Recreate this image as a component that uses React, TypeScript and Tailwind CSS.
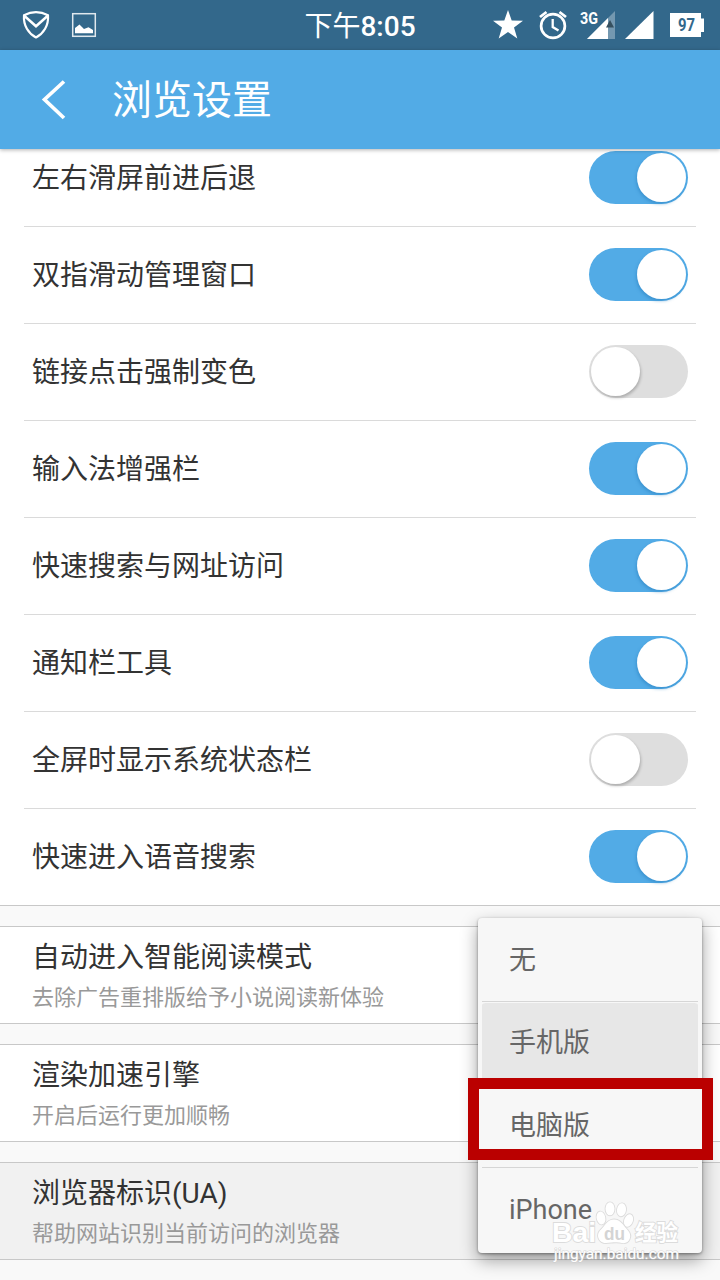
import React from "react";

const settings = [
  { label: "左右滑屏前进后退", on: true },
  { label: "双指滑动管理窗口", on: true },
  { label: "链接点击强制变色", on: false },
  { label: "输入法增强栏", on: true },
  { label: "快速搜索与网址访问", on: true },
  { label: "通知栏工具", on: true },
  { label: "全屏时显示系统状态栏", on: false },
  { label: "快速进入语音搜索", on: true },
];

const cards = [
  { title: "自动进入智能阅读模式", note: "去除广告重排版给予小说阅读新体验", active: false },
  { title: "渲染加速引擎", note: "开启后运行更加顺畅", active: false },
  { title: "浏览器标识(UA)", note: "帮助网站识别当前访问的浏览器", active: true },
];

const choices = ["无", "手机版", "电脑版", "iPhone"];

function Toggle({ on }: { on: boolean }) {
  return (
    <div
      className={
        "mb-px flex h-[53px] w-[99px] items-center rounded-full " +
        (on ? "justify-end bg-[#52abe6] pr-[2px]" : "justify-start bg-[#dedede] pl-[2px]")
      }
    >
      <div
        className={
          "size-[49px] rounded-full bg-white " +
          (on ? "shadow-[-1px_2px_3px_#2a80c080]" : "shadow-[1px_2px_3px_#00000038]")
        }
      />
    </div>
  );
}

function StatusBar() {
  return (
    <div className="flex h-[50px] shrink-0 items-center bg-[#33688b] text-white">
      <svg className="h-[50px] w-[300px] shrink-0" viewBox="0 0 300 50" fill="none">
        <path
          d="M24 15.3Q36 8.8 48 15.3C48.8 25.5 43.5 33.5 36 37.5C28.500 33.5 23.200 25.5 24 15.3Z"
          stroke="#fff"
          strokeWidth="2.200"
          strokeLinejoin="round"
        />
        <path d="M24.500 16L36 26.300L47.500 16" stroke="#fff" strokeWidth="2.500" />
        <rect x="72.700" y="13.700" width="22.600" height="22.600" stroke="#fff" strokeOpacity=".85" strokeWidth="1.500" />
        <path d="M75 33.300V28L79.500 24.500L84 29L88.500 27.200L93 30V33.300Z" fill="#fff" />
      </svg>
      <div className="w-[120px] pt-[3px] text-center text-[28px] leading-[47px] font-medium whitespace-nowrap">
        <span className="font-normal">下午</span>8:05
      </div>
      <svg className="ml-auto h-[50px] w-[260px] shrink-0" viewBox="460 0 260 50" fill="none">
        <path
          d="M508 10L511.700 20.500L523 20.800L514 27.500L517.300 38.500L508 32L498.700 38.500L502 27.500L493 20.800L504.300 20.500Z"
          fill="#fff"
        />
        <circle cx="553" cy="26" r="11.900" stroke="#fff" strokeWidth="2.700" />
        <path d="M552.700 19V27L558.500 30.500" stroke="#fff" strokeWidth="2.300" />
        <path d="M540 17L546.500 12M566 17L559.500 12" stroke="#fff" strokeWidth="2.800" />
        <path d="M615 11V39H587Z" fill="#fff" fillOpacity=".32" />
        <path d="M608 18V39H587Z" fill="#fff" />
        <path d="M606 27.500L610 20L614 27.500Z" fill="#36505f" />
        <text x="580" y="23.500" fill="#fff" fontSize="16.500" fontWeight="700" textLength="18" lengthAdjust="spacingAndGlyphs">
          3G
        </text>
        <path d="M653.500 11V39H625Z" fill="#fff" />
        <path d="M670 13H701V18.500H704V32H701V37H670Z" fill="#fff" />
        <text x="678" y="31.300" fill="#33688b" fontSize="18" fontWeight="700" textLength="17" lengthAdjust="spacingAndGlyphs">
          97
        </text>
      </svg>
    </div>
  );
}

function Watermark() {
  return (
    <svg
      className="absolute top-[1195px] left-[545px] z-30 h-[75px] w-[145px]"
      viewBox="545 1195 145 75"
      fill="#fff"
      stroke="#dcdcdc"
      strokeWidth="1.800"
      paintOrder="stroke"
    >
      <text x="552" y="1242" fontSize="27" fontWeight="700" textLength="44" lengthAdjust="spacingAndGlyphs" className="font-['Liberation_Sans']">
        Bai
      </text>
      <ellipse cx="601" cy="1218" rx="4.300" ry="6.500" transform="rotate(-12 601 1218)" />
      <ellipse cx="610" cy="1208.800" rx="4.500" ry="6.500" />
      <ellipse cx="621.500" cy="1209.800" rx="4.500" ry="6.500" transform="rotate(8 621.500 1209.800)" />
      <ellipse cx="628.500" cy="1220.500" rx="4.300" ry="6.500" transform="rotate(20 628.500 1220.500)" />
      <path d="M614 1219.500C607 1219.500 605 1226 601 1229.500C595 1235 599 1243 606 1243C611 1243 617 1241.500 622 1243C629 1244.500 633 1236 628 1230.500C623 1225.500 621 1219.500 614 1219.500Z" />
      <text x="604" y="1239.500" fontSize="19" fontWeight="700" fill="#d4d4d4" stroke="none" textLength="21" lengthAdjust="spacingAndGlyphs" className="font-['Liberation_Sans']">
        du
      </text>
      <text x="635" y="1240" fontSize="22" fontWeight="700" textLength="43" lengthAdjust="spacingAndGlyphs">
        经验
      </text>
      <text x="554" y="1259" fontSize="15.500" textLength="125" lengthAdjust="spacingAndGlyphs" stroke="#c8c8c8" strokeOpacity=".7" strokeWidth="1.200">
        jingyan.baidu.com
      </text>
    </svg>
  );
}

export default function App() {
  return (
    <div className="relative flex h-[1280px] w-[720px] flex-col overflow-hidden bg-[#f9f9f9] font-[Roboto,'Noto_Sans_CJK_SC',sans-serif]">
      <StatusBar />
      <header className="relative z-10 flex h-[99px] shrink-0 items-center bg-[#52abe6] pl-[40px] text-white shadow-[0_1px_4px_#00000050]">
        <svg className="mr-[46px] h-[44px] w-[26px]" viewBox="0 0 26 44" fill="none">
          <path d="M24 3.500L4.500 21.500L24 40" stroke="#fff" strokeWidth="3.700" />
        </svg>
        <h1 className="pt-[2px] text-[40px] leading-[50px] font-normal">浏览设置</h1>
      </header>

      <main className="flex min-h-0 flex-1 flex-col overflow-hidden">
        <section className="-mt-[19px] shrink-0 border-b border-[#c8c8c8] bg-white px-6">
          {settings.map((s) => (
            <div
              key={s.label}
              className="flex h-[97px] items-center justify-between border-b border-[#dadada] px-2 last:h-[96px] last:border-b-0"
            >
              <span className="pt-[2px] text-[28px] leading-[40px] text-[#333]">{s.label}</span>
              <Toggle on={s.on} />
            </div>
          ))}
        </section>
        {cards.map((c) => (
          <section
            key={c.title}
            className={
              "mt-5 flex h-[98px] shrink-0 flex-col border-y border-[#c8c8c8] px-8 pt-[11px] " +
              (c.active ? "bg-[#f1f1f1]" : "bg-white")
            }
          >
            <span className="text-[28px] leading-[40px] text-[#333]">{c.title}</span>
            <span className="text-[22px] leading-[40px] text-[#999]">{c.note}</span>
          </section>
        ))}
      </main>

      <div className="absolute top-[918px] left-[478px] z-10 flex h-[335px] w-[224px] flex-col rounded-[4px] bg-[#f7f7f7] px-1 shadow-[0_7px_17px_#00000060,0_1px_3px_#00000060]">
        {choices.map((c, i) => (
          <div
            key={c}
            className={
              "flex shrink-0 items-center border-[#d6d6d6] pl-[27px] text-[27px] leading-[40px] text-[#666] " +
              (i < 3 ? "border-b " : "") +
              (i === 0 ? "h-[84px]" : i === 1 ? "h-[83px] rounded-t-[3px] border-t border-t-[#f7f7f7] bg-[#e7e7e7] bg-clip-padding pb-[2px]" : "h-[83px]")
            }
          >
            {c}
          </div>
        ))}
      </div>
      <div className="absolute top-[1078px] left-[468px] z-20 h-[82px] w-[245px] border-[11px] border-[#ba0000]" />
      <Watermark />
    </div>
  );
}
